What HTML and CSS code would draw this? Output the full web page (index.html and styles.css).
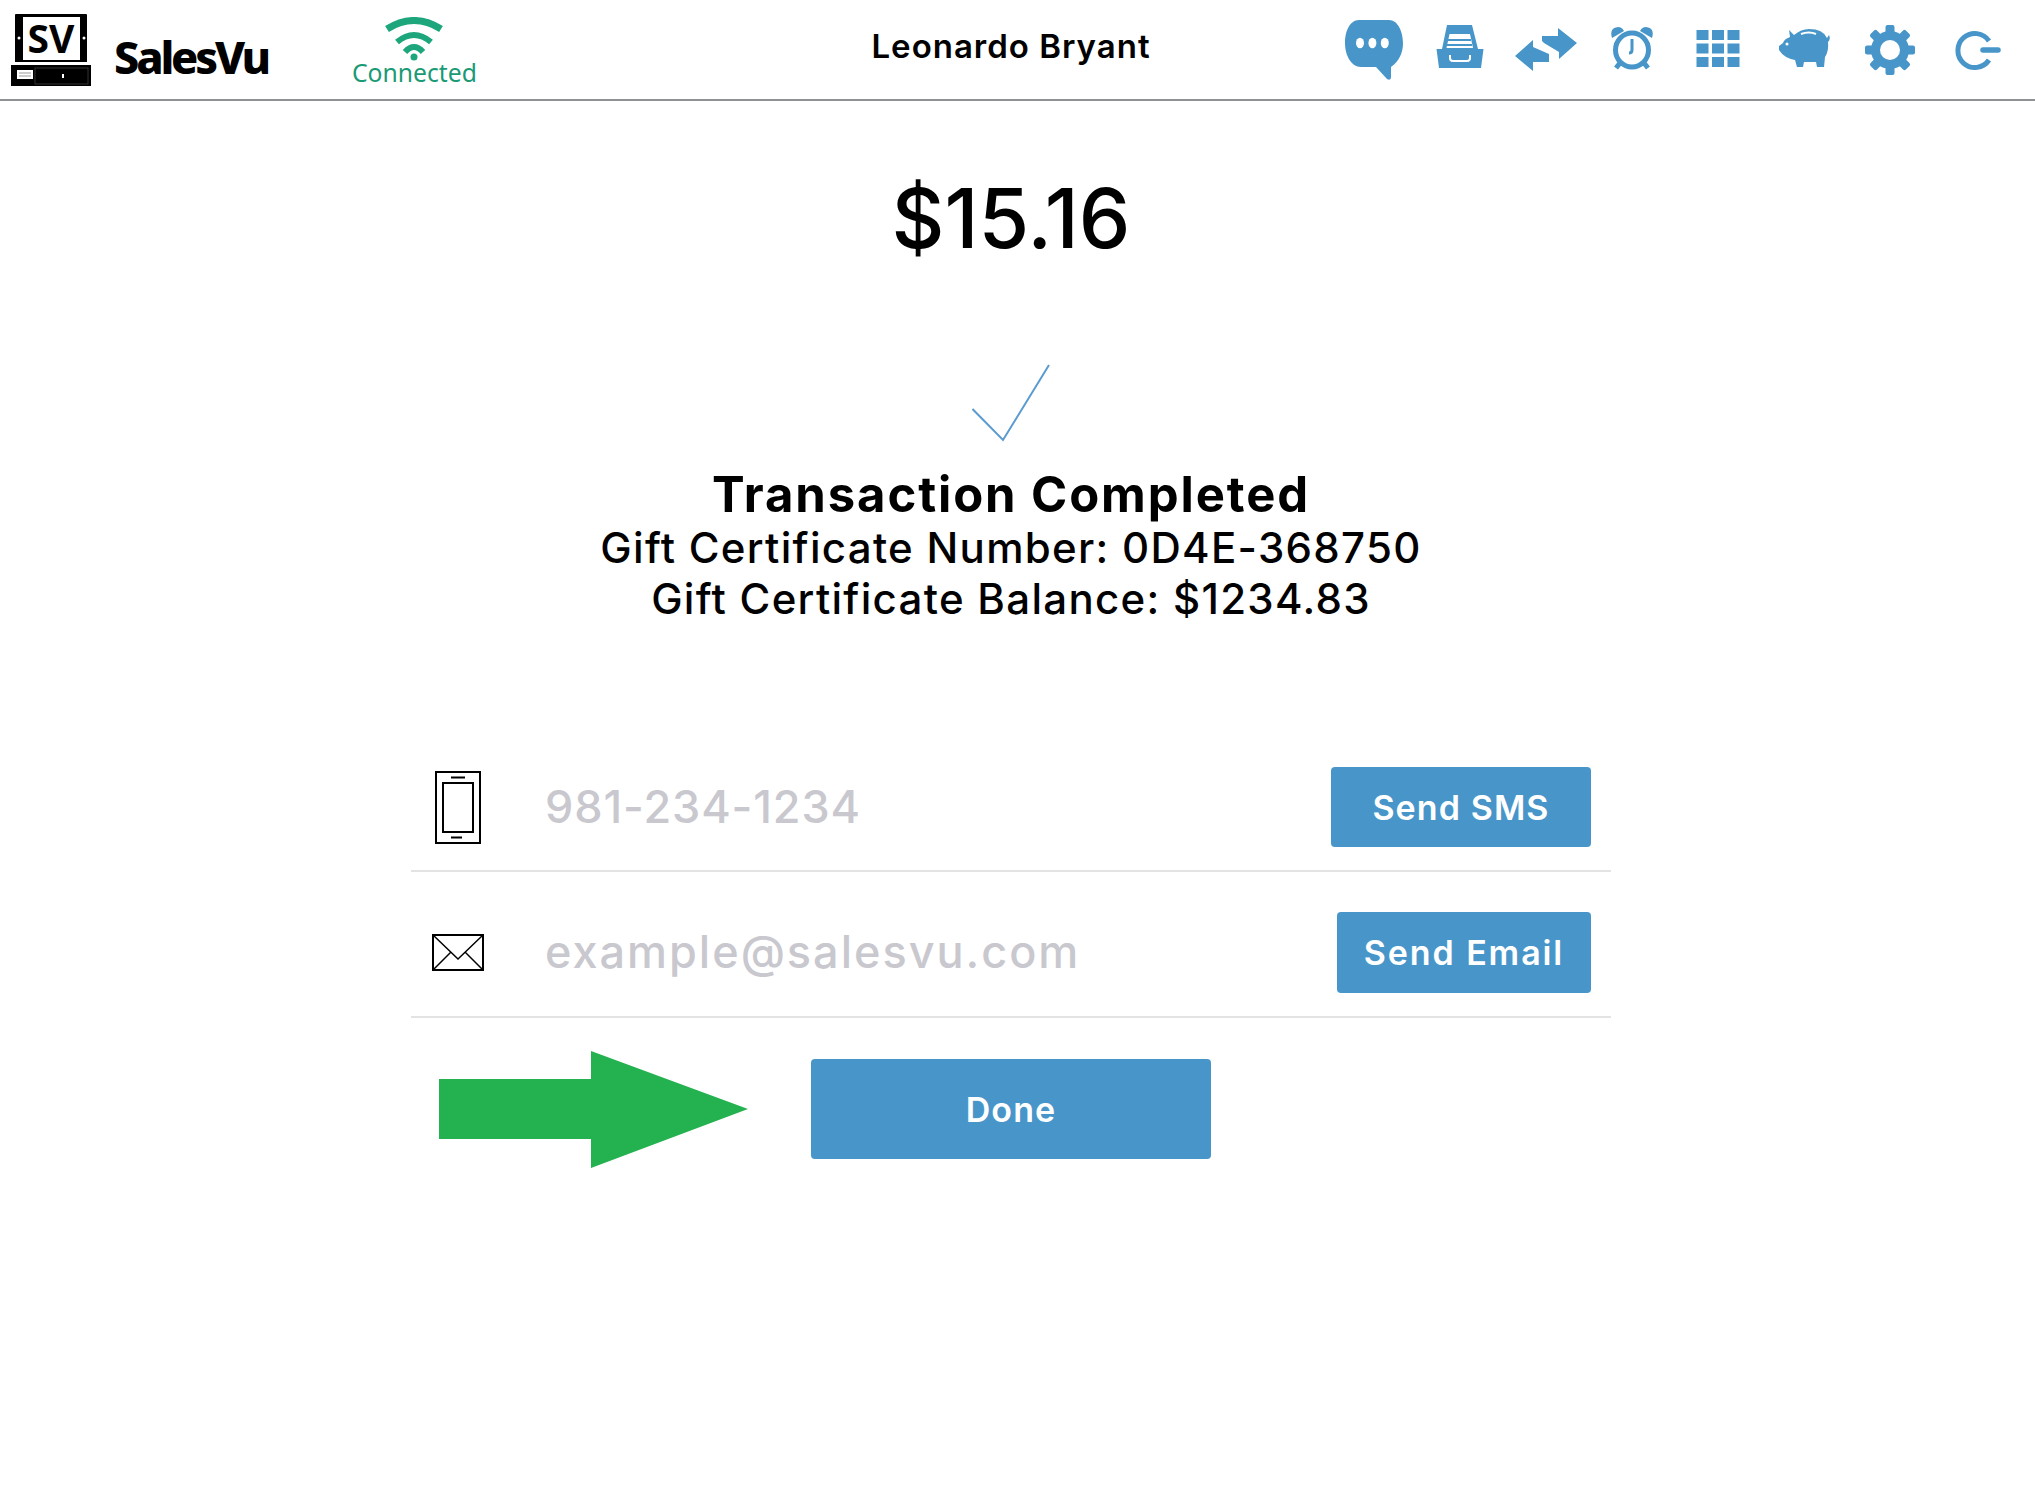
FILE: index.html
```html
<!DOCTYPE html>
<html lang="en">
<head>
    <meta charset="UTF-8">
    <meta name="viewport" content="width=device-width, initial-scale=1.0">
    <title>SalesVu</title>
    <link rel="stylesheet" href="styles.css">
</head>
<body>
    <header class="topbar">
        <div class="topbar-left">
            <svg class="logo" width="80" height="78" viewBox="0 -6 80 78">
                <path d="M5 0H75Q76 0 76 1V48H63V51H80V72H0V51H17V48H4V1Q4 0 5 0Z" fill="#000"/>
                <rect x="12" y="3" width="57" height="43" fill="#fff"/>
                <rect x="17" y="48" width="46" height="3" fill="#fff"/>
                <rect x="24" y="54" width="53" height="16" fill="none" stroke="#333" stroke-width="1"/>
                <rect x="6" y="56" width="16" height="9" fill="#fff"/>
                <path d="M8 59H20M8 62H20" stroke="#999" stroke-width="1"/>
                <rect x="51" y="60" width="2" height="4" fill="#fff"/>
                <circle cx="8" cy="24" r="1.500" fill="#fff"/>
                <circle cx="73" cy="24" r="1.500" fill="#fff"/>
                <text class="logo-mark" x="40" y="39" text-anchor="middle">SV</text>
            </svg>
            <span class="brand">SalesVu</span>
            <div class="status">
                <svg width="60" height="44" viewBox="0 0 60 44">
                    <path d="M3 12Q30 -5 57 12" fill="none" stroke="#1da67c" stroke-width="7"/>
                    <path d="M13 25Q30 11 47 25" fill="none" stroke="#1da67c" stroke-width="6"/>
                    <path d="M21 35Q30 25 39 35" fill="none" stroke="#1da67c" stroke-width="6"/>
                    <circle cx="30" cy="40" r="3.500" fill="#1da67c"/>
                </svg>
                <span class="status-text">Connected</span>
            </div>
        </div>
        <div class="user-name">Leonardo Bryant</div>
        <nav class="topbar-icons">
            <!-- chat -->
            <svg class="nav-icon" viewBox="0 0 70 70">
                <path d="M20 5H50C59 5 64 17 64 28C64 38 60 46 52 52V62Q52 66 48 64L37 52H22C12 52 6 40 6 28C6 16 11 5 20 5Z"/>
                <ellipse class="cut" cx="21" cy="28" rx="4" ry="5.300"/>
                <ellipse class="cut" cx="33.400" cy="28" rx="4" ry="5.300"/>
                <ellipse class="cut" cx="45.800" cy="28" rx="4" ry="5.300"/>
            </svg>
            <!-- drawer -->
            <svg class="nav-icon" viewBox="0 0 70 70">
                <path d="M22 10H47L53 34H58.500L56 53H14L11.500 34H17Z"/>
                <path class="cut" d="M24.500 19H45L48 33H21.500Z"/>
                <rect x="23" y="24" width="23" height="2"/>
                <rect x="22" y="29" width="25" height="2"/>
                <path class="cut-line" d="M25 40V43Q25 46 28 46H42Q45 46 45 43V40"/>
            </svg>
            <!-- transfer -->
            <svg class="nav-icon" viewBox="0 0 70 70">
                <path d="M31 21H47V13L66 28L48 44V37L33 28L31 26Z"/>
                <path d="M4 41L22 25V32L38 39V47H22V56Z"/>
            </svg>
            <!-- alarm clock -->
            <svg class="nav-icon" viewBox="0 0 70 70">
                <path d="M15 23Q12 13 21 12Q25 12 27 16Z"/>
                <path d="M55 23Q58 13 49 12Q45 12 43 16Z"/>
                <ellipse class="ring" cx="35" cy="35" rx="16.500" ry="17"/>
                <path class="ring-thin" d="M35 24V35Q35 38 32 38"/>
                <path class="ring" d="M23 48L19 53M47 48L51 53"/>
            </svg>
            <!-- grid -->
            <svg class="nav-icon" viewBox="0 0 70 70">
                <rect x="13.500" y="15" width="12" height="10"/>
                <rect x="29" y="15" width="12" height="10"/>
                <rect x="44.500" y="15" width="12" height="10"/>
                <rect x="13.500" y="28.500" width="12" height="10"/>
                <rect x="29" y="28.500" width="12" height="10"/>
                <rect x="44.500" y="28.500" width="12" height="10"/>
                <rect x="13.500" y="42" width="12" height="10"/>
                <rect x="29" y="42" width="12" height="10"/>
                <rect x="44.500" y="42" width="12" height="10"/>
            </svg>
            <!-- piggy bank -->
            <svg class="nav-icon" viewBox="0 0 70 70">
                <path d="M20 15L25 20Q32 14 40 14Q54 14 58 23L60 20Q62 24 59 27Q60 36 56 42L55 52H48L47 47H35L34 52H28L26 45Q15 43 10 35V31L14 28Q15 24 21 22Z"/>
                <circle class="cut" cx="18" cy="29" r="1.500"/>
                <path class="cut-thin" d="M32 19Q40 16 47 19"/>
            </svg>
            <!-- settings -->
            <svg class="nav-icon" viewBox="0 0 70 70">
                <circle cx="35" cy="35" r="19"/>
                <rect x="30.500" y="10" width="9" height="50" rx="2"/>
                <rect x="30.500" y="10" width="9" height="50" rx="2" transform="rotate(45 35 35)"/>
                <rect x="30.500" y="10" width="9" height="50" rx="2" transform="rotate(90 35 35)"/>
                <rect x="30.500" y="10" width="9" height="50" rx="2" transform="rotate(135 35 35)"/>
                <circle class="cut" cx="35" cy="35" r="10"/>
            </svg>
            <!-- logout -->
            <svg class="nav-icon" viewBox="0 0 70 70">
                <path class="ring" d="M48 26A17 17 0 1 0 48 45"/>
                <path class="ring-round" d="M42 35H57"/>
            </svg>
        </nav>
    </header>

    <main class="receipt">
        <div class="amount">$15.16</div>
        <svg class="check" width="78" height="78" viewBox="0 0 78 78">
            <path d="M0.500 45L31 76L77 1" fill="none" stroke="#5b9bd0" stroke-width="2"/>
        </svg>
        <h1 class="result-title">Transaction Completed</h1>
        <div class="result-line">Gift Certificate Number: 0D4E-368750</div>
        <div class="result-line">Gift Certificate Balance: $1234.83</div>

        <div class="send-form">
            <div class="send-row">
                <div class="row-icon">
                    <svg width="46" height="73" viewBox="0 0 46 73">
                        <rect x="1" y="1" width="44" height="71" fill="none" stroke="#000" stroke-width="2"/>
                        <rect x="8" y="12" width="30" height="49" fill="none" stroke="#000" stroke-width="2"/>
                        <path d="M16 6.500H30M16 66.500H27" stroke="#000" stroke-width="2"/>
                    </svg>
                </div>
                <span class="row-hint">981-234-1234</span>
                <button class="btn btn-sms">Send SMS</button>
            </div>
            <div class="send-row send-row-email">
                <div class="row-icon">
                    <svg width="52" height="37" viewBox="0 0 52 37">
                        <rect x="1" y="1" width="50" height="35" fill="none" stroke="#000" stroke-width="2"/>
                        <path d="M1 1L26 25L51 1M1 36L19 18M51 36L33 18" fill="none" stroke="#000" stroke-width="1.500"/>
                    </svg>
                </div>
                <span class="row-hint row-hint-email">example@salesvu.com</span>
                <button class="btn btn-email">Send Email</button>
            </div>
            <div class="done-row">
                <svg class="done-arrow" viewBox="0 0 309 117">
                    <polygon points="0,28 152,28 152,0 309,58 152,117 152,88 0,88" fill="#24b14f"/>
                </svg>
                <button class="btn btn-done">Done</button>
            </div>
        </div>
    </main>
</body>
</html>
```

FILE: styles.css
```css
body {
    margin: 0;
    background: #fff;
    color: #000;
    font-family: Inter, "Liberation Sans", sans-serif;
}
.topbar {
    display: grid;
    grid-template-columns: 1fr auto 1fr;
    align-items: center;
    height: 99px;
    border-bottom: 2px solid #8f9193;
    padding-right: 13px;
    width: 2022px;
}
.topbar-left {
    display: flex;
    align-items: center;
    padding-left: 11px;
}
.logo {
    margin-bottom: 5px;
}
.logo-mark {
    font-family: "Noto Sans", sans-serif;
    font-weight: 700;
    font-size: 39px;
}
.brand {
    margin-left: 23px;
    margin-top: 14px;
    width: 152px;
    font-family: "Noto Sans", sans-serif;
    font-weight: 800;
    font-size: 45px;
    letter-spacing: -3.200px;
    white-space: nowrap;
}
.status {
    display: flex;
    flex-direction: column;
    align-items: center;
    margin-left: 86px;
    margin-top: 3px;
}
.status-text {
    margin-top: -1px;
    color: #1a9a75;
    font-family: "Noto Sans", sans-serif;
    font-size: 24.700px;
    line-height: 26px;
}
.user-name {
    font-size: 33px;
    font-weight: 600;
    letter-spacing: 1px;
    margin-bottom: 8px;
}
.topbar-icons {
    display: flex;
    justify-content: flex-end;
    padding-right: 3px;
}
.nav-icon {
    width: 70px;
    height: 70px;
    margin: 0 8px;
    fill: #4896c9;
}
.nav-icon .cut {
    fill: #fff;
}
.nav-icon .cut-line,
.nav-icon .cut-thin {
    fill: none;
    stroke: #fff;
    stroke-width: 2;
}
.nav-icon .ring,
.nav-icon .ring-thin,
.nav-icon .ring-round {
    fill: none;
    stroke: #4896c9;
    stroke-width: 5;
}
.nav-icon .ring-thin {
    stroke-width: 3;
}
.nav-icon .ring-round {
    stroke-width: 5.500;
    stroke-linecap: round;
}
.receipt {
    display: flex;
    flex-direction: column;
    align-items: center;
    width: 2022px;
    min-height: 1402px;
}
.amount {
    margin-top: 68px;
    font-size: 82px;
    font-weight: 500;
    line-height: 100px;
}
.check {
    margin-top: 95px;
}
.result-title {
    margin: 26px 0 0;
    font-size: 49px;
    font-weight: 700;
    line-height: 54px;
    letter-spacing: 1.900px;
}
.result-line {
    font-size: 42px;
    font-weight: 500;
    line-height: 51px;
    letter-spacing: 1.300px;
}
.send-form {
    margin-top: 104px;
    width: 1200px;
}
.send-row {
    display: flex;
    align-items: center;
    height: 80px;
    padding: 39px 20px 23px 0;
    border-bottom: 2px solid #e3e3e3;
}
.send-row-email {
    height: 81px;
    padding-top: 40px;
}
.row-icon {
    display: flex;
    justify-content: center;
    width: 94px;
    margin-right: 40px;
}
.row-hint {
    flex: 1;
    padding-bottom: 2px;
    color: #c8c8ce;
    font-size: 45px;
    font-weight: 500;
    letter-spacing: 0.900px;
}
.row-hint-email {
    letter-spacing: 2px;
}
.btn {
    border: none;
    border-radius: 4px;
    background: #4896c9;
    color: #fff;
    font-family: Inter, "Liberation Sans", sans-serif;
    font-size: 34px;
    font-weight: 600;
    letter-spacing: 1.100px;
    cursor: pointer;
}
.btn-sms {
    width: 260px;
    height: 80px;
}
.btn-email {
    width: 254px;
    height: 81px;
    letter-spacing: 1.900px;
}
.done-row {
    position: relative;
    display: flex;
    justify-content: center;
    margin-top: 41px;
}
.done-arrow {
    position: absolute;
    left: 28px;
    top: -8px;
    width: 309px;
    height: 117px;
}
.btn-done {
    width: 400px;
    height: 100px;
}
```
